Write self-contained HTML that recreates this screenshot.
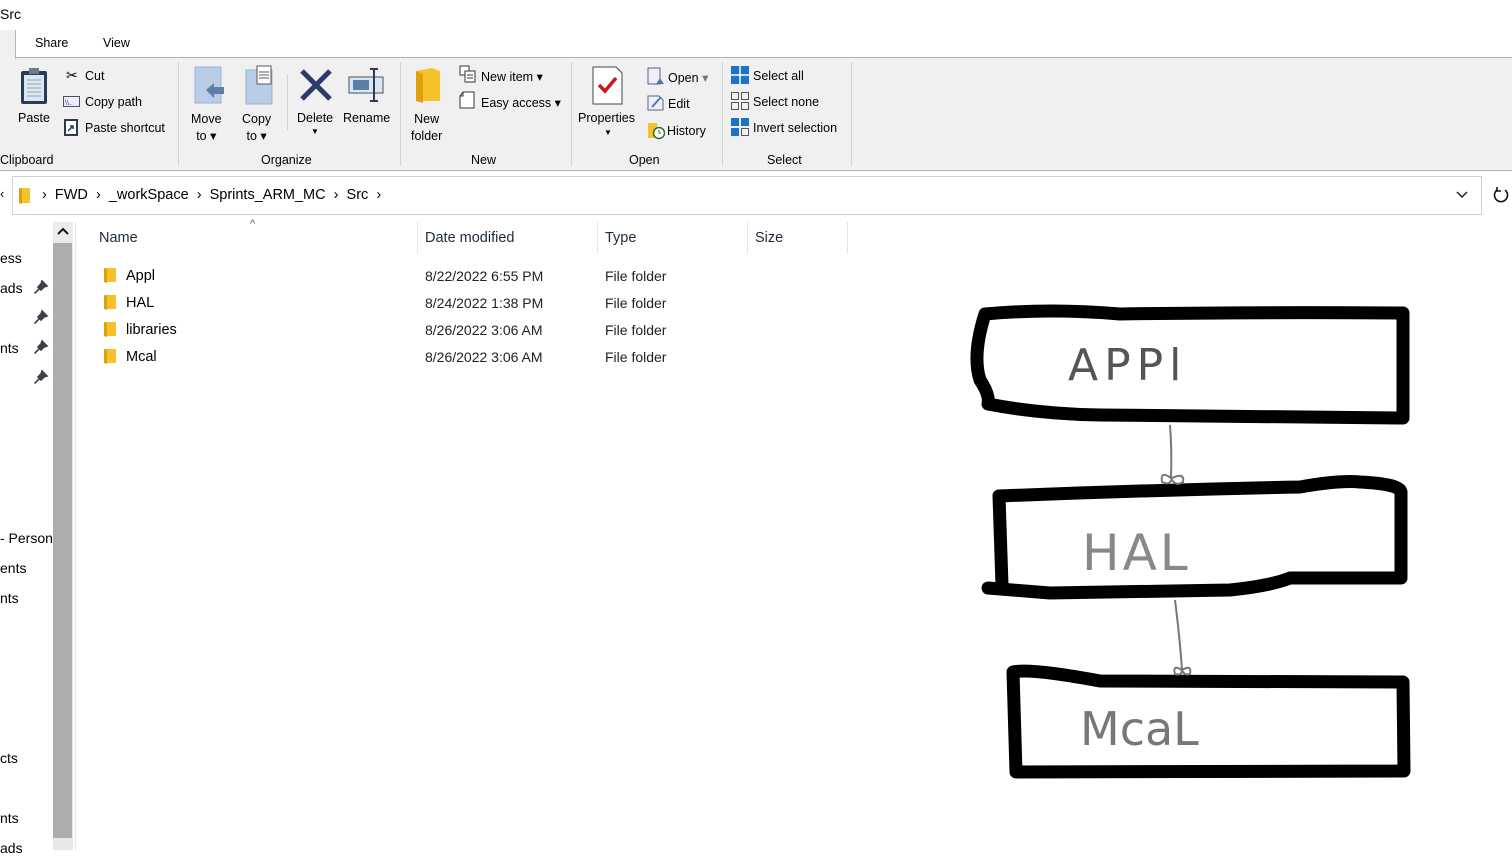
<!DOCTYPE html>
<html><head><meta charset="utf-8"><style>
*{margin:0;padding:0;box-sizing:border-box}
body{width:1512px;height:850px;overflow:hidden;background:#fff;font-family:"Liberation Sans",sans-serif;font-size:13px;color:#000;position:relative}
.a{position:absolute;white-space:nowrap}
.s{font-size:12.5px}
.sep{position:absolute;width:1px;background:#d5d5d5}
</style></head><body>
<div class="a" style="left:0;top:6px;font-size:14px">Src</div>
<div class="a s" style="left:35px;top:36px">Share</div>
<div class="a s" style="left:103px;top:36px">View</div>
<div class="a" style="left:0;top:57px;width:1512px;height:114px;background:#f0f0f0;border-top:1px solid #b0b0b0;border-bottom:1px solid #b0b0b0"></div>
<div class="a" style="left:0;top:30px;width:16px;height:29px;background:#f0f0f0;border-right:1px solid #b5b5b5"></div>
<svg class="a" style="left:19px;top:66px" width="30" height="40"><rect x="2" y="5" width="26" height="33" rx="2" fill="#2b3b55"/><rect x="5" y="9" width="20" height="26" fill="#dbe6f3"/><rect x="10" y="2" width="10" height="6" fill="#6c7b92"/><g stroke="#8aa" stroke-width="1"><line x1="8" y1="14" x2="22" y2="14"/><line x1="8" y1="18" x2="22" y2="18"/><line x1="8" y1="22" x2="22" y2="22"/><line x1="8" y1="26" x2="22" y2="26"/><line x1="8" y1="30" x2="22" y2="30"/></g></svg>
<div class="a s" style="left:18px;top:111px">Paste</div>
<div class="a s" style="left:66px;top:67px;font-size:14px">✂</div>
<div class="a s" style="left:85px;top:69px">Cut</div>
<svg class="a" style="left:63px;top:96px" width="18" height="12"><rect x="0.5" y="0.5" width="16" height="10" fill="#eef" stroke="#456"/><text x="2" y="9" font-size="7" fill="#345">\\..</text></svg>
<div class="a s" style="left:85px;top:95px">Copy path</div>
<svg class="a" style="left:64px;top:118px" width="14" height="18"><rect x="1" y="2" width="12" height="15" fill="#fff" stroke="#2b3b55" stroke-width="2"/><path d="M4 13 L9 8 M6 8 H9 V11" stroke="#2b3b55" stroke-width="1.5" fill="none"/></svg>
<div class="a s" style="left:85px;top:121px">Paste shortcut</div>
<div class="a s" style="left:0;top:153px">Clipboard</div>
<div class="sep" style="left:178px;top:62px;height:104px"></div>
<svg class="a" style="left:194px;top:66px" width="34" height="40"><rect x="1" y="1" width="26" height="36" fill="#b9cde6" stroke="#9db4d3"/><path d="M12 24 L20 17 V21 H30 V28 H20 V32 Z" fill="#5b7fa8"/></svg>
<div class="a s" style="left:191px;top:111px;text-align:center;line-height:17px">Move<br>to ▾</div>
<svg class="a" style="left:244px;top:64px" width="36" height="42"><rect x="2" y="6" width="26" height="34" fill="#b9cde6" stroke="#9db4d3"/><rect x="13" y="2" width="14" height="18" fill="#fff" stroke="#556"/><g stroke="#556"><line x1="15" y1="8" x2="25" y2="8"/><line x1="15" y1="11" x2="25" y2="11"/><line x1="15" y1="14" x2="25" y2="14"/></g></svg>
<div class="a s" style="left:242px;top:111px;text-align:center;line-height:17px">Copy<br>to ▾</div>
<div class="sep" style="left:287px;top:74px;height:56px"></div>
<svg class="a" style="left:299px;top:68px" width="34" height="34"><path d="M3 3 L31 31 M31 3 L3 31" stroke="#2b3b6b" stroke-width="5"/></svg>
<div class="a s" style="left:297px;top:111px">Delete</div>
<div class="a" style="left:311px;top:127px;font-size:8px">▼</div>
<svg class="a" style="left:347px;top:67px" width="40" height="36"><rect x="2" y="10" width="34" height="16" fill="#dbe6f3" stroke="#456"/><rect x="6" y="13" width="16" height="10" fill="#5b7fa8"/><path d="M27 2 V34 M23 2 H31 M23 34 H31" stroke="#2b3b55" stroke-width="2"/></svg>
<div class="a s" style="left:343px;top:111px">Rename</div>
<div class="a s" style="left:261px;top:153px">Organize</div>
<div class="sep" style="left:400px;top:62px;height:104px"></div>
<svg class="a" style="left:414px;top:67px" width="30" height="38"><path d="M2 4 L18 1 L26 4 V34 H2 Z" fill="#f6c22c"/><path d="M2 4 V34 L9 36 V7 Z" fill="#e0a00e"/></svg>
<div class="a s" style="left:411px;top:111px;text-align:center;line-height:17px">New<br>folder</div>
<svg class="a" style="left:459px;top:65px" width="18" height="18"><rect x="1" y="1" width="9" height="9" fill="#fff" stroke="#333"/><rect x="6" y="6" width="10" height="11" fill="#fff" stroke="#333"/><g stroke="#333"><line x1="8" y1="10" x2="14" y2="10"/><line x1="8" y1="13" x2="14" y2="13"/></g></svg>
<div class="a s" style="left:481px;top:69px">New item ▾</div>
<svg class="a" style="left:459px;top:91px" width="16" height="18"><path d="M4 1 H15 V17 H1 V5 Z M1 5 H4 V1" fill="#fff" stroke="#333"/></svg>
<div class="a s" style="left:481px;top:95px">Easy access ▾</div>
<div class="a s" style="left:471px;top:153px">New</div>
<div class="sep" style="left:571px;top:62px;height:104px"></div>
<svg class="a" style="left:592px;top:66px" width="32" height="40"><path d="M1 1 H24 L30 7 V38 H1 Z" fill="#fff" stroke="#444"/><path d="M7 19 L13 25 L24 12" stroke="#c8191e" stroke-width="3.5" fill="none"/></svg>
<div class="a s" style="left:578px;top:111px">Properties</div>
<div class="a" style="left:604px;top:128px;font-size:8px">▼</div>
<svg class="a" style="left:647px;top:67px" width="18" height="18"><rect x="1" y="1" width="12" height="16" fill="#eef" stroke="#567"/><path d="M9 17 L13 11 L17 17 Z" fill="#4a7ab0"/></svg>
<div class="a s" style="left:668px;top:70px">Open <span style="color:#777">▾</span></div>
<svg class="a" style="left:647px;top:93px" width="18" height="18"><path d="M1 3 H12 L16 7 V17 H1 Z" fill="#eef" stroke="#567"/><path d="M5 14 L14 4" stroke="#4a7ab0" stroke-width="2"/></svg>
<div class="a s" style="left:668px;top:97px">Edit</div>
<svg class="a" style="left:647px;top:120px" width="18" height="20"><path d="M1 3 H10 V18 H1 Z" fill="#f6c22c"/><circle cx="12" cy="13" r="5.5" fill="#fff" stroke="#2a6a2a" stroke-width="1.5"/><path d="M12 10 V13 H14" stroke="#2a6a2a" fill="none"/></svg>
<div class="a s" style="left:667px;top:124px">History</div>
<div class="a s" style="left:629px;top:153px">Open</div>
<div class="sep" style="left:722px;top:62px;height:104px"></div>
<svg class="a" style="left:731px;top:66px" width="18" height="18"><rect x="0" y="0" width="18" height="18" fill="#1e72c8"/><path d="M9 0 V18 M0 9 H18" stroke="#fff" stroke-width="1.5"/></svg>
<div class="a s" style="left:753px;top:69px">Select all</div>
<svg class="a" style="left:731px;top:92px" width="18" height="18"><g fill="none" stroke="#555"><rect x="0.5" y="0.5" width="7" height="7"/><rect x="10.5" y="0.5" width="7" height="7"/><rect x="0.5" y="10.5" width="7" height="7"/><rect x="10.5" y="10.5" width="7" height="7"/></g></svg>
<div class="a s" style="left:753px;top:95px">Select none</div>
<svg class="a" style="left:731px;top:118px" width="18" height="18"><rect x="0" y="0" width="8" height="8" fill="#1e72c8"/><rect x="10" y="0" width="8" height="8" fill="#1e72c8"/><rect x="0" y="10" width="8" height="8" fill="#1e72c8"/><rect x="10.5" y="10.5" width="7" height="7" fill="none" stroke="#555"/></svg>
<div class="a s" style="left:753px;top:121px">Invert selection</div>
<div class="a s" style="left:767px;top:153px">Select</div>
<div class="sep" style="left:851px;top:62px;height:104px"></div>
<div class="a" style="left:0;top:186px;font-size:13px">‹</div>
<div class="a" style="left:12px;top:176px;width:1470px;height:39px;border:1px solid #d0d0d0;background:#fff"></div>
<div class="a" style="left:1481px;top:176px;width:1px;height:39px;background:#d0d0d0"></div>
<svg class="a" style="left:19px;top:187px" width="12" height="17"><path d="M0 1 H11 V16 H0 Z" fill="#f6c22c"/><path d="M0 1 V16 L3 17 V2 Z" fill="#e0a00e"/></svg>
<div class="a" style="left:42px;top:187px;font-size:14.5px">›&nbsp;&nbsp;FWD&nbsp;&nbsp;›&nbsp;&nbsp;_workSpace&nbsp;&nbsp;›&nbsp;&nbsp;Sprints_ARM_MC&nbsp;&nbsp;›&nbsp;&nbsp;Src&nbsp;&nbsp;›</div>
<svg class="a" style="left:1456px;top:191px" width="12" height="8"><path d="M1 1 L6 6 L11 1" stroke="#222" stroke-width="1.5" fill="none"/></svg>
<svg class="a" style="left:1493px;top:186px" width="16" height="18"><path d="M4 4 A6.5 6.5 0 1 0 12 4" stroke="#111" stroke-width="1.6" fill="none"/><path d="M4 1 V5 H8" stroke="#111" stroke-width="1.6" fill="none"/></svg>
<div class="a" style="left:0;top:250px;font-size:14px">ess</div>
<div class="a" style="left:0;top:280px;font-size:14px">ads</div>
<div class="a" style="left:0;top:340px;font-size:14px">nts</div>
<svg class="a" style="left:33px;top:280px" width="16" height="110"><g fill="#3a3f4a" stroke="#3a3f4a" stroke-width="1.6" stroke-linecap="round">
<path d="M9 1 L14 6 L11 7 L8 10 L5 7 L8 4 Z M6 9 L2 13"/>
<path d="M9 31 L14 36 L11 37 L8 40 L5 37 L8 34 Z M6 39 L2 43"/>
<path d="M9 61 L14 66 L11 67 L8 70 L5 67 L8 64 Z M6 69 L2 73"/>
<path d="M9 91 L14 96 L11 97 L8 100 L5 97 L8 94 Z M6 99 L2 103"/></g></svg>
<div class="a" style="left:0;top:530px;font-size:14px">- Person</div>
<div class="a" style="left:0;top:560px;font-size:14px">ents</div>
<div class="a" style="left:0;top:590px;font-size:14px">nts</div>
<div class="a" style="left:0;top:750px;font-size:14px">cts</div>
<div class="a" style="left:0;top:810px;font-size:14px">nts</div>
<div class="a" style="left:0;top:840px;font-size:14px">ads</div>
<div class="a" style="left:53px;top:222px;width:20px;height:628px;background:#e8e8e8"></div>
<div class="a" style="left:53px;top:222px;width:20px;height:20px;background:#ececec"></div>
<svg class="a" style="left:57px;top:227px" width="12" height="9"><path d="M1 7 L6 2 L11 7" stroke="#111" stroke-width="2" fill="none"/></svg>
<div class="a" style="left:53px;top:243px;width:19px;height:595px;background:#adadad"></div>
<div class="a" style="left:75px;top:222px;width:1px;height:628px;background:#e5e5e5"></div>
<div class="a" style="left:250px;top:218px;font-size:11px;color:#555">^</div>
<div class="a" style="left:99px;top:230px;font-size:14.5px;color:#1e2a3a">Name</div>
<div class="sep" style="left:417px;top:222px;height:32px;background:#e5e5e5"></div>
<div class="a" style="left:425px;top:230px;font-size:14.5px;color:#1e2a3a">Date modified</div>
<div class="sep" style="left:597px;top:222px;height:32px;background:#e5e5e5"></div>
<div class="a" style="left:605px;top:230px;font-size:14.5px;color:#1e2a3a">Type</div>
<div class="sep" style="left:747px;top:222px;height:32px;background:#e5e5e5"></div>
<div class="a" style="left:755px;top:230px;font-size:14.5px;color:#1e2a3a">Size</div>
<div class="sep" style="left:847px;top:222px;height:32px;background:#e5e5e5"></div>
<svg class="a" style="left:104px;top:267px" width="14" height="16"><path d="M0 1 H12 V15 H0 Z" fill="#f6c22c"/><path d="M0 1 V15 L3 16 V2 Z" fill="#e0a00e"/></svg>
<svg class="a" style="left:104px;top:294px" width="14" height="16"><path d="M0 1 H12 V15 H0 Z" fill="#f6c22c"/><path d="M0 1 V15 L3 16 V2 Z" fill="#e0a00e"/></svg>
<svg class="a" style="left:104px;top:321px" width="14" height="16"><path d="M0 1 H12 V15 H0 Z" fill="#f6c22c"/><path d="M0 1 V15 L3 16 V2 Z" fill="#e0a00e"/></svg>
<svg class="a" style="left:104px;top:348px" width="14" height="16"><path d="M0 1 H12 V15 H0 Z" fill="#f6c22c"/><path d="M0 1 V15 L3 16 V2 Z" fill="#e0a00e"/></svg>
<div class="a" style="left:126px;top:263px;font-size:14.5px;line-height:27px">Appl<br>HAL<br>libraries<br>Mcal</div>
<div class="a" style="left:425px;top:263px;font-size:14px;line-height:27px;color:#222">8/22/2022 6:55 PM<br>8/24/2022 1:38 PM<br>8/26/2022 3:06 AM<br>8/26/2022 3:06 AM</div>
<div class="a" style="left:605px;top:263px;font-size:14px;line-height:27px;color:#222">File folder<br>File folder<br>File folder<br>File folder</div>
<svg class="a" style="left:0;top:0" width="1512" height="850">
<g fill="none" stroke="#000" stroke-width="13" stroke-linejoin="round" stroke-linecap="round">
<path d="M985 314 Q1050 308 1120 314 Q1250 312 1403 313 L1403 418 Q1200 416 1100 415 Q1040 414 988 404 Q990 395 980 380 Q972 355 985 314 Z"/>
<path d="M999 496 Q1150 490 1300 487 Q1340 480 1360 482 Q1400 484 1401 492 L1401 578 L1290 578 Q1270 586 1230 590 L1050 593 L988 588"/>
<path d="M999 496 L1002 585"/>
<path d="M1013 672 Q1030 668 1100 681 L1403 682 L1404 771 L1016 772 L1013 672 Z"/>
</g>
<g fill="none" stroke="#777" stroke-width="2">
<path d="M1170 425 Q1172 450 1171 478"/><path d="M1171 478 Q1160 470 1162 482 Q1170 486 1172 478 Q1185 472 1183 482 Q1175 487 1171 478"/>
<path d="M1175 600 Q1180 640 1182 670"/><path d="M1182 670 Q1172 664 1175 674 Q1182 676 1182 670 Q1192 664 1190 674 Q1184 676 1182 670"/>
</g>
<text x="1068" y="380" font-family="'DejaVu Sans'" font-size="44" fill="#555" letter-spacing="6">APPl</text>
<text x="1082" y="570" font-family="'DejaVu Sans'" font-size="50" fill="#888" letter-spacing="3">HAL</text>
<text x="1080" y="745" font-family="'DejaVu Sans'" font-size="46" fill="#777">McaL</text>
</svg>
</body></html>
